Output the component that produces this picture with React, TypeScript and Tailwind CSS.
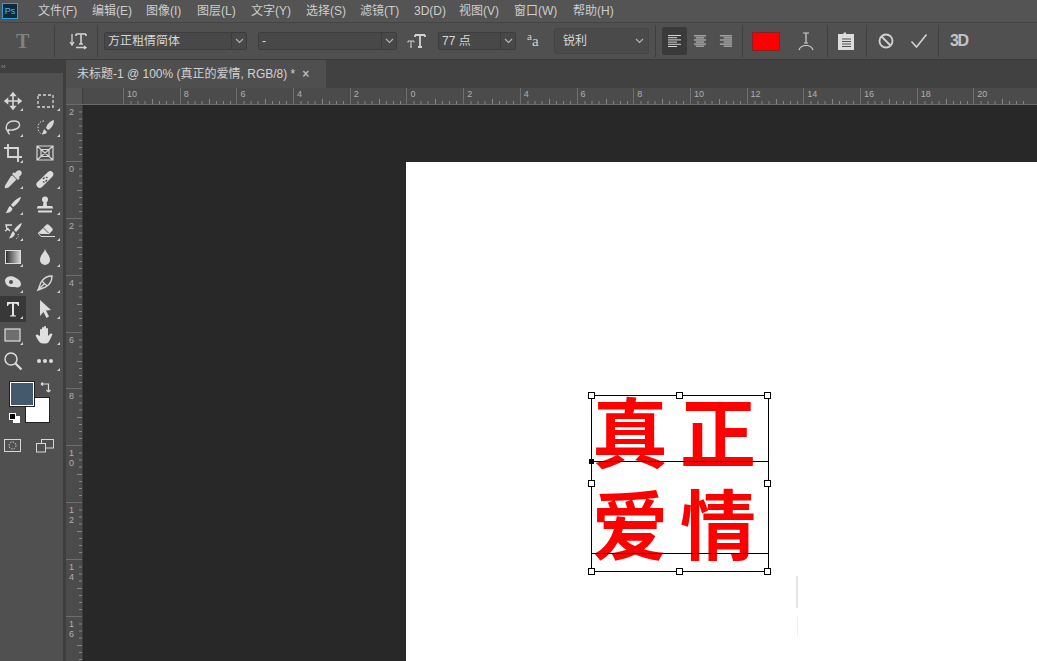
import React from "react";

const cjk = "font-['Liberation_Sans','Noto_Sans_CJK_SC',sans-serif]";

const menuItems = [
  { label: "文件(F)", width: "w-[54px]" },
  { label: "编辑(E)", width: "w-[54px]" },
  { label: "图像(I)", width: "w-[51px]" },
  { label: "图层(L)", width: "w-[54px]" },
  { label: "文字(Y)", width: "w-[55px]" },
  { label: "选择(S)", width: "w-[54px]" },
  { label: "滤镜(T)", width: "w-[54px]" },
  { label: "3D(D)", width: "w-[45px]" },
  { label: "视图(V)", width: "w-[55px]" },
  { label: "窗口(W)", width: "w-[59px]" },
  { label: "帮助(H)", width: "w-[50px]" },
];

const Chevron = () => (
  <svg width="9" height="6" viewBox="0 0 9 6" fill="none" stroke="#b5b5b5" strokeWidth="1.1">
    <path d="M1 1l3.5 3.5L8 1" />
  </svg>
);

const Sep = ({ className }: { className: string }) => <div className={`h-[32px] w-px bg-[#3f3f3f] ${className}`} />;

function Select({ text, width, textClass = "text-[12px]", split = true }: { text: string; width: string; textClass?: string; split?: boolean }) {
  return (
    <div className={`flex h-[18px] items-center rounded-[2px] border border-[#3d3d3d] bg-[#484848] ${width}`}>
      <span className={`flex-1 truncate pl-[3px] leading-none text-[#d6d6d6] ${textClass}`}>{text}</span>
      <span className={`flex h-full w-[15px] items-center justify-center ${split ? "border-l border-[#3d3d3d]" : ""}`}>
        <Chevron />
      </span>
    </div>
  );
}

const AlignIcon = ({ kind }: { kind: "left" | "center" | "right" }) => {
  const rows = [13, 9, 13, 9, 13, 9];
  return (
    <svg width="15" height="14" viewBox="0 0 15 14" stroke="#d4d4d4" strokeWidth="1">
      {rows.map((w, i) => {
        const x = kind === "left" ? 1 : kind === "right" ? 14 - w : 7.5 - w / 2;
        return <path key={i} d={`M${x} ${1.5 + i * 2.2}h${w}`} />;
      })}
    </svg>
  );
};

function OptionsBar() {
  return (
    <div className={`flex h-[37px] shrink-0 items-center border-b border-[#3a3a3a] bg-[#505050] ${cjk}`}>
      <span className="ml-[16px] w-[14px] font-['Liberation_Serif',serif] text-[20px] font-bold leading-none text-[#828282]">T</span>
      <Sep className="ml-[24px]" />
      <svg className="ml-[14px]" width="20" height="20" viewBox="0 0 20 20" fill="none" stroke="#d2d2d2" strokeWidth="1.3">
        <path d="M3 3v10M1 11l2 3 2-3" />
        <path d="M7 3h10M7 3v2M17 3v2M12 3v10M10 13h4" strokeWidth="1.6" />
        <path d="M7 16.500h10M15 15l2 1.500-2 1.500" />
      </svg>
      <Sep className="ml-[8px]" />
      <Select text="方正粗倩简体" width="w-[143px] ml-[6px]" />
      <Select text="-" width="w-[139px] ml-[11px]" />
      <svg className="ml-[10px]" width="20" height="18" viewBox="0 0 20 18" fill="none" stroke="#d2d2d2" strokeWidth="1.4">
        <path d="M8 3h10M8 3v2M18 3v2M13 3v12M11 15h4" strokeWidth="1.8" />
        <path d="M1 9h6M1 9v1.500M7 9v1.500M4 9v6M3 15h2" strokeWidth="1" />
      </svg>
      <Select text="77 点" width="w-[78px] ml-[11px]" />
      <span className="ml-[11px] w-[27px] font-['Liberation_Serif',serif] text-[15px] leading-none text-[#cfcfcf]">
        <sup className="text-[11px]">a</sup>a
      </span>
      <div className="flex h-[26px] w-[95px] items-center rounded-[2px] border border-[#454545] bg-[#4a4a4a]">
        <span className="flex-1 pl-[8px] text-[12px] leading-none text-[#d6d6d6]">锐利</span>
        <span className="pr-[4px]">
          <Chevron />
        </span>
      </div>
      <Sep className="ml-[6px]" />
      <div className="ml-[6px] flex h-[28px] w-[25px] items-center justify-center rounded-[2px] bg-[#3a3a3a]">
        <AlignIcon kind="left" />
      </div>
      <div className="ml-[6px] flex w-[14px] justify-center">
        <AlignIcon kind="center" />
      </div>
      <div className="ml-[12px] flex w-[14px] justify-center">
        <AlignIcon kind="right" />
      </div>
      <Sep className="ml-[9px]" />
      <div className="ml-[9px] h-[19px] w-[28px] border border-[#8c2020] bg-[#ff0000]" />
      <svg className="ml-[17px]" width="18" height="22" viewBox="0 0 18 22" fill="none" stroke="#cfcfcf" strokeWidth="1.2">
        <path d="M6 3h6M9 3v10M7 13h4M2 20c2-6 12-6 14 0" />
      </svg>
      <Sep className="ml-[12px]" />
      <svg className="ml-[10px]" width="16" height="18" viewBox="0 0 16 18">
        <path d="M0 2h5l1-1.500 h2V2h8v16H0z" fill="#dcdcdc" />
        <path d="M4 7h9M4 9.500h9M4 12h9M4 14.500h9" stroke="#505050" strokeWidth="1" />
      </svg>
      <Sep className="ml-[12px]" />
      <svg className="ml-[11px]" width="16" height="16" viewBox="0 0 16 16" fill="none" stroke="#d2d2d2" strokeWidth="1.800">
        <circle cx="8" cy="8" r="6.500" />
        <path d="M3.500 3.500l9 9" />
      </svg>
      <svg className="ml-[16px]" width="18" height="16" viewBox="0 0 18 16" fill="none" stroke="#d2d2d2" strokeWidth="1.600">
        <path d="M1.500 8.500l5 5.500L16.500 1.500" />
      </svg>
      <Sep className="ml-[10px]" />
      <span className="ml-[11px] font-['Liberation_Sans',sans-serif] text-[16px] font-bold leading-none tracking-[-1.5px] text-[#c4c4c4]">3D</span>
    </div>
  );
}

const stroke = { fill: "none", stroke: "#d6d6d6", strokeWidth: 1.3 };

const toolIcons: Record<string, React.ReactNode> = {
  move: <path {...stroke} d="M10 2v16M2 10h16M10 2L8 4.500h4zM10 18l-2-2.500h4zM2 10l2.500-2v4zM18 10l-2.500-2v4z" strokeWidth="1.600" />,
  marquee: <rect {...stroke} x="3" y="4" width="15" height="12" strokeDasharray="3 2" />,
  lasso: <path {...stroke} d="M6 15C1 12 3 4 11 4c7 0 7 6 2 8-3 1.200-6 1.500-8 .5M6 13c-2 1-1 4 1 4" strokeWidth="1.400" />,
  quick: (
    <>
      <path d="M9 4C4 4 3 8 3 11s2 6 5 6" fill="none" stroke="#d6d6d6" strokeDasharray="1.500 1.500" />
      <path d="M19 3c-4 1-7 4-8 8l2 2c4-2 6-6 6-10z" fill="#d6d6d6" />
      <path d="M9 12l3 3c-1 2-3 2.500-5 2 1-1 1-3 2-5z" fill="#d6d6d6" />
    </>
  ),
  crop: <path {...stroke} d="M5 1v13h14M1 5h14v14" strokeWidth="1.900" />,
  frame: <path {...stroke} d="M2 3h16v14H2zM2 3l16 14M18 3L2 17M6 6.500h8v7H6z" strokeWidth="1.200" />,
  dropper: <path d="M14 2c1-1 3-1 4 0s1 3 0 4l-2 2 .5 1.500-1.500 1.500L9 5l1.500-1.500L12 4zM8 7l1.500-.5 4 4L6 18c-1 1-3 1.500-4 1 -.5-1 0-3 1-4z" fill="#d6d6d6" />,
  bandage: (
    <>
      <path d="M2 13.500L13 3c1.500-1.500 3.500-1 4.500 0s1.500 3 0 4.500L7 18c-1.500 1.500-3.500 1-4.500 0S.5 15 2 13.500z" fill="#dcdcdc" />
      <path d="M8 10l1.500-1.500M10.500 12.500L12 11M8 12.500l1.500 1M11 8l1.500 1" stroke="#505050" strokeWidth="1.500" />
    </>
  ),
  brush: (
    <>
      <path d="M18 2c-1 4-5 8-8 10L8 10c2-3 6-7 10-8z" fill="#dcdcdc" />
      <path d="M7 11l2.500 2.500c-.5 3-3 4.500-7 4.500 2-1.500 2-5 4.500-7z" fill="#dcdcdc" />
    </>
  ),
  stamp: (
    <>
      <circle cx="10" cy="4.500" r="3" fill="#dcdcdc" />
      <path d="M8.500 7h3l.5 4h4.500c1 0 1.500 1 1.500 2.500H2C2 12 2.500 11 3.500 11H8z" fill="#dcdcdc" />
      <path d="M3 15.500h14v2H3z" fill="#dcdcdc" />
    </>
  ),
  history: (
    <>
      <path d="M19 2c-1 4-4 7-6 9l-2-2c2-3 5-6 8-7z" fill="#dcdcdc" />
      <path d="M10 10l2 2.500c-.5 3-3 4.500-6 5 1.500-2 2-5 4-7.500z" fill="#dcdcdc" />
      <path d="M9 4H3l1 4M2 10l3-2 2 2" fill="none" stroke="#dcdcdc" strokeWidth="1.400" />
      <path d="M15 13c1 2 0 3.500-2 5" fill="none" stroke="#dcdcdc" strokeDasharray="1 1.500" />
    </>
  ),
  eraser: (
    <>
      <path d="M3 12l8-8c1-1 2-1 3 0l3 3c1 1 1 2 0 3l-3 3-4 0-4 0z" fill="#dcdcdc" />
      <path d="M8 6.500l5.500 5.500" stroke="#505050" />
      <path d="M3 12l3 3.500h14" fill="none" stroke="#dcdcdc" />
    </>
  ),
  gradient: (
    <>
      <defs>
        <linearGradient id="toolGradient" x1="0" x2="1" y1="0" y2="0">
          <stop offset="0" stopColor="#2a2a2a" />
          <stop offset="1" stopColor="#d8d8d8" />
        </linearGradient>
      </defs>
      <rect x="2.500" y="3.500" width="15" height="13" fill="url(#toolGradient)" stroke="#dcdcdc" />
    </>
  ),
  drop: <path d="M10 2c1 4 5 6 5 11a5 5 0 0 1-10 0c0-5 4-7 5-11z" fill="#dcdcdc" />,
  dodge: (
    <>
      <path d="M2 7c1-4 7-5 11-2 2 1 5 3 5 6s-3 4-6 3c-4 0-10 0-10-7z" fill="#dcdcdc" />
      <circle cx="8" cy="9" r="2" fill="#505050" />
    </>
  ),
  pen: <path {...stroke} d="M17 3c-4 0-8 2-10 5-2 2-2 5-4 9 4-2 7-2 9-4 3-2 5-6 5-10zM3 17l6-6M7 8l5 5" strokeWidth="1.400" />,
  type: <path d="M4 3h12v4h-1c-.5-1.500-1-2.200-3-2.200h-1v10.700c0 .8.500 1 2 1v1H7v-1c1.500 0 2-.2 2-1V4.800H8C6 4.800 5.500 5.500 5 7H4z" fill="#e4e4e4" />,
  arrow: <path d="M5 1l11 10-5 .5 3 6-2.500 1.500-3-6L5 17z" fill="#dcdcdc" />,
  shape: <rect x="2" y="4" width="15" height="12" fill="#6e6e6e" stroke="#dcdcdc" strokeWidth="1.200" />,
  hand: <path d="M5 11V5c0-1.500 2-1.500 2 0v4-6c0-1.500 2-1.500 2 0v6-7c0-1.500 2-1.500 2 0v7-5c0-1.500 2-1.500 2 0v7l2-2c1.500-1 3 0 2 1.500l-3 6c-1 1.500-2 2-4 2H8c-2 0-3-1-4-2l-3-5c-1-1.500 1-2.500 2-1.500z" fill="#e0e0e0" />,
  zoom: (
    <>
      <circle cx="8" cy="8" r="6" fill="none" stroke="#dcdcdc" strokeWidth="1.500" />
      <path d="M12.500 12.500L18.500 18.500" stroke="#dcdcdc" strokeWidth="2.200" />
    </>
  ),
  more: (
    <>
      <circle cx="4" cy="10" r="2" fill="#dcdcdc" />
      <circle cx="10" cy="10" r="2" fill="#dcdcdc" />
      <circle cx="16" cy="10" r="2" fill="#dcdcdc" />
    </>
  ),
};

const toolOrder = ["move", "marquee", "lasso", "quick", "crop", "frame", "dropper", "bandage", "brush", "stamp", "history", "eraser", "gradient", "drop", "dodge", "pen", "type", "arrow", "shape", "hand", "zoom", "more"];

function Tool({ name }: { name: string }) {
  const active = name === "type";
  const noCorner = name === "zoom" || name === "frame";
  return (
    <div className={`relative flex h-[26px] items-center justify-center ${active ? "bg-[#383838]" : ""}`}>
      <svg width="20" height="20" viewBox="0 0 20 20">
        {toolIcons[name]}
      </svg>
      {!noCorner && <span className="absolute bottom-[3px] right-[3px] h-0 w-0 border-b-[3px] border-l-[3px] border-b-[#cfcfcf] border-l-transparent" />}
    </div>
  );
}

function Toolbar() {
  return (
    <div className="flex w-[66px] shrink-0 flex-col border-r-[3px] border-[#3e3e3e] bg-[#505050]">
      <div className="flex h-[13px] items-center bg-[#3f3f3f] pl-px text-[7px] leading-none text-[#9a9a9a]">‹‹</div>
      <div className="h-[15px]" />
      <div className="grid grid-cols-[26px_37px]">
        {toolOrder.map((name) => (
          <Tool key={name} name={name} />
        ))}
      </div>
      {/* colour swatches */}
      <div className="relative mt-[8px] h-[52px]">
        <div className="absolute left-[25px] top-[15px] h-[26px] w-[25px] border border-[#222] bg-white" />
        <div className="absolute left-[10px] top-0 h-[24px] w-[24px] border border-white bg-[#44596b] outline outline-1 outline-[#222]" />
        <svg className="absolute left-[40px] top-0" width="12" height="12" viewBox="0 0 12 12" fill="none" stroke="#dcdcdc" strokeWidth="1.200">
          <path d="M1 2h7.500v7M1 2l2-1.500M1 2l2 1.500M8.500 10L6.500 8M8.500 10l2-2" />
        </svg>
        <div className="absolute left-[13px] top-[34px] h-[7px] w-[7px] bg-white" />
        <div className="absolute left-[9px] top-[31px] h-[7px] w-[7px] border border-white bg-black" />
      </div>
      <div className="mt-[5px] grid grid-cols-[26px_37px]">
        <div className="flex justify-center">
          <svg width="18" height="13" viewBox="0 0 18 13" fill="none" stroke="#d6d6d6">
            <rect x="0.500" y="0.500" width="16" height="12" />
            <circle cx="8.500" cy="6.500" r="3.500" strokeDasharray="1.500 1.200" />
          </svg>
        </div>
        <div className="flex justify-center">
          <svg width="18" height="14" viewBox="0 0 18 14" fill="none" stroke="#d6d6d6">
            <rect x="5.500" y="0.500" width="12" height="8.500" />
            <rect x="0.500" y="4.500" width="9" height="8.500" fill="#505050" />
          </svg>
        </div>
      </div>
    </div>
  );
}

const minorTicks = [7, 14, 21, 28.5, 35.500, 42.500, 49.500];

function HorizontalRuler() {
  const labels = ["10", "8", "6", "4", "2", "0", "2", "4", "6", "8", "10", "12", "14", "16", "18", "20"];
  return (
    <div className="flex h-[17px] shrink-0 overflow-hidden border-b border-[#6a6a6a] bg-[#4b4b4b] font-['Liberation_Sans',sans-serif]">
      <div className="h-full w-[17px] shrink-0 border-r border-[#3d3d3d] bg-[#555555]" />
      <div className="w-[40px] shrink-0" />
      {labels.map((label, i) => (
        <div key={i} className="relative h-full w-[56.7px] shrink-0 border-l border-[#6e6e6e]">
          <span className="absolute left-[3px] top-[1px] text-[9px] leading-[11px] text-[#b0b0b0]">{label}</span>
          <svg className="absolute bottom-0 left-0" width="57" height="5" stroke="#858585">
            {minorTicks.map((x) => (
              <path key={x} d={`M${x} ${x === 28.5 ? 0 : 2}V5`} />
            ))}
          </svg>
        </div>
      ))}
    </div>
  );
}

function VerticalRuler() {
  const labels = ["2", "0", "2", "4", "6", "8", "10", "12", "14", "16"];
  return (
    <div className="w-[17px] shrink-0 overflow-hidden border-r border-[#3a3a3a] bg-[#4b4b4b] font-['Liberation_Sans',sans-serif]">
      {labels.map((label, i) => (
        <div key={i} className="relative h-[56.9px] border-b border-[#6e6e6e]">
          <span className="absolute left-[3px] top-[2px] flex flex-col text-[9px] leading-[10px] text-[#b0b0b0]">
            {label.split("").map((c, j) => (
              <span key={j}>{c}</span>
            ))}
          </span>
          <svg className="absolute right-0 top-0" width="5" height="57" stroke="#858585">
            {minorTicks.map((y) => (
              <path key={y} d={`M${y === 28.5 ? 0 : 2} ${y}H5`} />
            ))}
          </svg>
        </div>
      ))}
    </div>
  );
}

const handleSpots = [
  "left-[-4px] top-[-4px]",
  "left-[84px] top-[-4px]",
  "left-[172px] top-[-4px]",
  "left-[-4px] top-[84px]",
  "left-[172px] top-[84px]",
  "left-[-4px] top-[172px]",
  "left-[84px] top-[172px]",
  "left-[172px] top-[172px]",
];

function TextBox() {
  return (
    <div className="absolute left-[185px] top-[233px] h-[177px] w-[178px] border border-black">
      <div className="flex flex-col font-['Noto_Sans_CJK_SC',sans-serif] text-[76px] font-bold leading-[92px] tracking-[12px] text-[#ff0000]">
        <span className="mt-[-13px] whitespace-nowrap">真正</span>
        <span className="whitespace-nowrap">爱情</span>
      </div>
      <div className="absolute left-0 right-0 top-[65px] h-px bg-black" />
      <div className="absolute left-0 right-0 top-[157px] h-px bg-black" />
      <div className="absolute left-[-3px] top-[63px] h-[5px] w-[5px] bg-black" />
      {handleSpots.map((spot) => (
        <div key={spot} className={`absolute h-[7px] w-[7px] border border-black bg-white ${spot}`} />
      ))}
    </div>
  );
}

export default function App() {
  return (
    <div className={`flex h-[661px] w-[1037px] flex-col overflow-hidden bg-[#404040] ${cjk}`}>
      <div className="flex h-[23px] shrink-0 items-center border-b border-[#444] bg-[#545454]">
        <div className="ml-[2px] flex h-[16px] w-[16px] items-center justify-center border border-[#2fa3d8] bg-[#0b2a3d] text-[9px] leading-none text-[#4fb6ea]">Ps</div>
        <div className="ml-[20px] flex">
          {menuItems.map((item) => (
            <span key={item.label} className={`${item.width} whitespace-nowrap text-[12px] leading-none text-[#cdcdcd]`}>
              {item.label}
            </span>
          ))}
        </div>
      </div>
      <OptionsBar />
      <div className="flex min-h-0 flex-1">
        <Toolbar />
        <div className="flex min-w-0 flex-1 flex-col">
          <div className="flex h-[28px] shrink-0 bg-[#414141]">
            <div className="flex w-[260px] items-center bg-[#4f4f4f] pl-[11px] text-[12px] leading-none text-[#d2d2d2]">
              <span className="whitespace-nowrap">未标题-1 @ 100% (真正的爱情, RGB/8) *</span>
              <span className="ml-[7px] text-[12px] font-bold text-[#b8b8b8]">×</span>
            </div>
          </div>
          <HorizontalRuler />
          <div className="flex min-h-0 flex-1">
            <VerticalRuler />
            <div className="flex min-w-0 flex-1 flex-col bg-[#282828] pl-[323px] pt-[57px]">
              <div className="relative flex-1 bg-white">
                <TextBox />
                <div className="absolute left-[390px] top-[414px] h-[32px] w-[2px] bg-[#e6e6e6]" />
                <div className="absolute left-[391px] top-[455px] h-[20px] w-px bg-[#f0f0f0]" />
              </div>
            </div>
          </div>
        </div>
      </div>
    </div>
  );
}
